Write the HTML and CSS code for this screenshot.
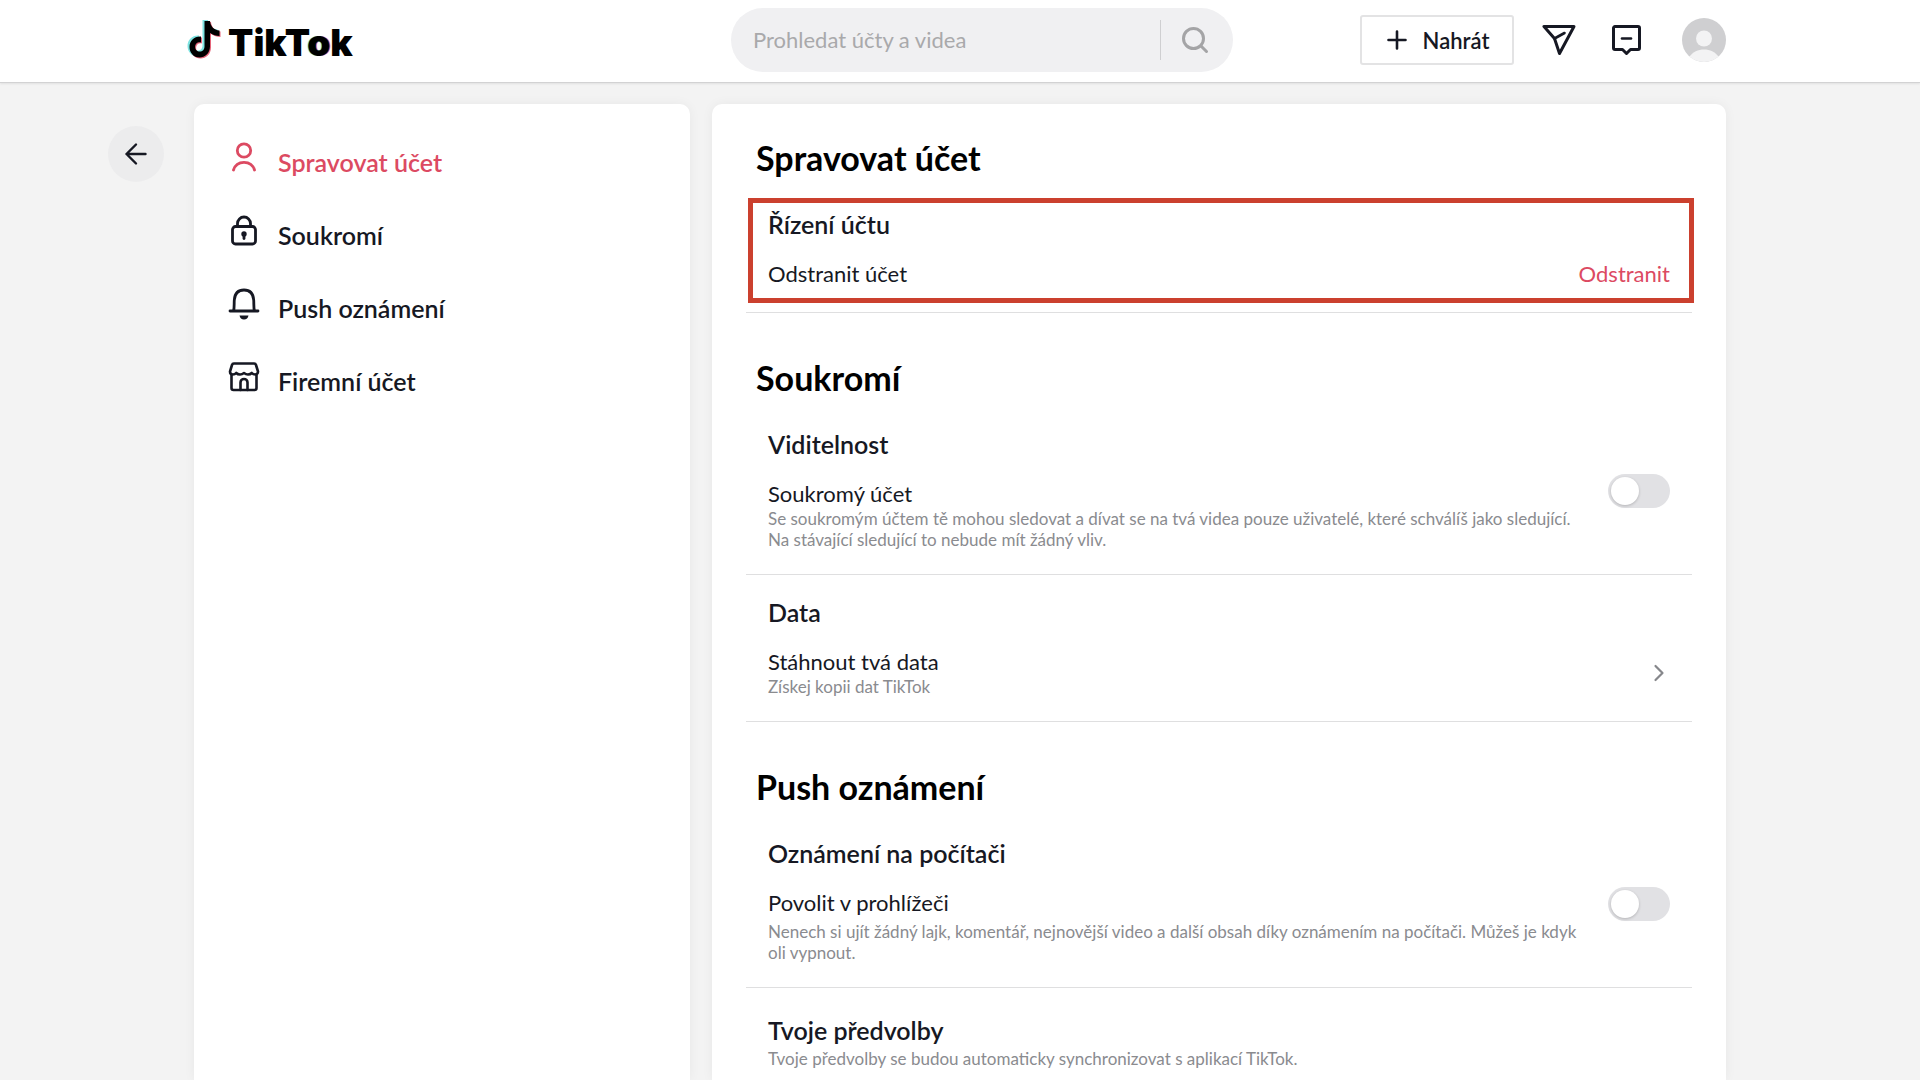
FILE: index.html
```
<!DOCTYPE html>
<html lang="cs">

<head>
    <meta charset="UTF-8">
    <meta name="viewport" content="width=device-width, initial-scale=1.0">
    <title>Spravovat účet | TikTok</title>
    <link rel="stylesheet" href="styles.css">
</head>

<body>

    <header class="header">
        <div class="header-inner">
            <a class="logo" href="#" aria-label="TikTok">
                <svg class="logo-mark" width="38" height="42" viewBox="0 0 38 42">
                    <defs>
                        <path id="note" d="M18.500 2h5.500c.5 5.500 4 9 9.500 9.500v5.500c-3.500 0-6.500-1-9.500-3v13.200c0 7-5 11.300-10.500 11.300C7.500 38.500 3.500 33.500 3.500 28 3.500 21.500 8.500 17 15 17.500v6c-3.400-.8-5.900 1.300-5.900 4.200 0 2.700 2 4.800 4.600 4.800 2.900 0 4.800-2 4.800-5.300z" />
                    </defs>
                    <use href="#note" x="-2" y="-1" fill="#7de3e1" />
                    <use href="#note" x="1" y="1" fill="#e5657a" />
                    <use href="#note" x="0" y="0" fill="#000" />
                </svg>
                <span class="logo-text">TikT<span class="logo-o">o</span>k</span>
            </a>

            <form class="search" role="search">
                <input class="search-input" type="text" placeholder="Prohledat účty a videa" aria-label="Prohledat účty a videa">
                <button class="search-button" type="button" aria-label="Hledat">
                    <svg width="28" height="28" viewBox="0 0 28 28" fill="none" stroke="#a4a4a6" stroke-width="3" stroke-linecap="round">
                        <circle cx="12.500" cy="12.500" r="10" />
                        <path d="M20 20l5.500 5.500" />
                    </svg>
                </button>
            </form>

            <div class="actions">
                <button class="upload" type="button">
                    <svg width="20" height="20" viewBox="0 0 20 20" fill="none" stroke="#161823" stroke-width="2.600" stroke-linecap="round">
                        <path d="M10 1.500v17M1.500 10h17" />
                    </svg>
                    Nahrát
                </button>
                <button class="icon-button" type="button" aria-label="Zprávy">
                    <svg width="34" height="32" viewBox="0 0 34 32" fill="none" stroke="#161823" stroke-width="3" stroke-linejoin="round" stroke-linecap="round">
                        <path d="M2 2.500h30L17.500 29.500 12.500 14.500z" />
                        <path d="M12.500 14.500l10-5.500" stroke-width="2.600" />
                    </svg>
                </button>
                <button class="icon-button" type="button" aria-label="Doručené">
                    <svg width="30" height="32" viewBox="0 0 30 32" fill="none" stroke="#161823" stroke-width="3" stroke-linejoin="round" stroke-linecap="round">
                        <path d="M3 2.500h23a1.500 1.500 0 0 1 1.500 1.500v20a1.500 1.500 0 0 1-1.500 1.500h-7.500l-4 4-4-4H3A1.500 1.500 0 0 1 1.500 24V4a1.500 1.500 0 0 1 1.500-1.500z" />
                        <path d="M10 14.500h9" stroke-width="2.600" />
                    </svg>
                </button>
                <button class="avatar" type="button" aria-label="Profil">
                    <svg width="44" height="44" viewBox="0 0 44 44">
                        <circle cx="22" cy="22" r="22" fill="#cfcfd1" />
                        <circle cx="22" cy="20.500" r="8" fill="#f3f3f4" />
                        <path d="M7.500 38.500C11 34 16 31.500 22 31.500s11 2.500 14.500 7A22 22 0 0 1 7.500 38.500z" fill="#f3f3f4" />
                    </svg>
                </button>
            </div>
        </div>
    </header>

    <main class="layout">
        <button class="back" type="button" aria-label="Zpět">
            <svg width="24" height="24" viewBox="0 0 24 24" fill="none" stroke="#161823" stroke-width="2.400" stroke-linecap="round" stroke-linejoin="round">
                <path d="M12 2.500L2.500 12 12 21.500M2.500 12H21.500" />
            </svg>
        </button>

        <nav class="card sidebar">
            <a class="nav-item active" href="#ucet">
                <svg width="32" height="32" viewBox="0 0 32 32" fill="none" stroke="currentColor" stroke-width="2.800" stroke-linecap="round">
                    <circle cx="16" cy="8.500" r="6.700" />
                    <path d="M5.500 28C7 23 11 20.300 16 20.300s9 2.700 10.500 7.700" />
                </svg>
                <span>Spravovat účet</span>
            </a>
            <a class="nav-item" href="#soukromi">
                <svg width="32" height="32" viewBox="0 0 32 32" fill="none" stroke="currentColor" stroke-width="2.800" stroke-linecap="round">
                    <rect x="4.500" y="11.500" width="23" height="17.500" rx="3" />
                    <path d="M9.500 11.500V8.500a6.500 6.500 0 0 1 13 0v3" />
                    <circle cx="16" cy="19" r="1.800" fill="currentColor" stroke-width="1.800" />
                    <path d="M16 19.500v4" />
                </svg>
                <span>Soukromí</span>
            </a>
            <a class="nav-item" href="#push">
                <svg width="32" height="32" viewBox="0 0 32 32" fill="none" stroke="currentColor" stroke-width="2.800" stroke-linecap="round" stroke-linejoin="round">
                    <path d="M2 23h28M5.500 23c1-3 .5-7 .8-11C6.800 5.500 10.500 2 16 2s9.200 3.500 9.700 10c.3 4-.2 8 .8 11" />
                    <path d="M11.500 27.500h9c-.5 2.600-2 4-4.500 4s-4-1.400-4.500-4z" fill="currentColor" stroke="none" />
                </svg>
                <span>Push oznámení</span>
            </a>
            <a class="nav-item" href="#firma">
                <svg width="32" height="32" viewBox="0 0 32 32" fill="none" stroke="currentColor" stroke-width="2.600" stroke-linecap="round" stroke-linejoin="round">
                    <path d="M6 2.500h20a2 2 0 0 1 2 1.500l2 6.500c0 1.800-1 3-2.800 3s-2.700-.7-3.400-1.500c-.8.800-1.800 1.500-3.800 1.500s-3-.7-4-1.500c-1 .8-2 1.500-4 1.500s-3-.7-3.800-1.500c-.7.800-1.600 1.500-3.400 1.500S2 12.300 2 10.500L4 4A2 2 0 0 1 6 2.500z" />
                    <path d="M3.500 14v13a2 2 0 0 0 2 2h21a2 2 0 0 0 2-2V14" />
                    <path d="M12.500 29v-7.500a3.500 3.500 0 0 1 7 0V29" />
                </svg>
                <span>Firemní účet</span>
            </a>
        </nav>

        <div class="card content">
            <section class="section" id="ucet">
                <h2>Spravovat účet</h2>
                <div class="group highlight">
                    <h3>Řízení účtu</h3>
                    <div class="row">
                        <span class="label">Odstranit účet</span>
                        <button class="delete" type="button">Odstranit</button>
                    </div>
                </div>
            </section>

            <section class="section" id="soukromi">
                <h2>Soukromí</h2>
                <div class="group">
                    <h3>Viditelnost</h3>
                    <div class="row">
                        <div class="text">
                            <label class="label" for="private">Soukromý účet</label>
                            <p>Se soukromým účtem tě mohou sledovat a dívat se na tvá videa pouze uživatelé, které schválíš jako sledující.<br>Na stávající sledující to nebude mít žádný vliv.</p>
                        </div>
                        <input class="toggle" type="checkbox" role="switch" id="private">
                    </div>
                </div>
                <div class="group">
                    <h3>Data</h3>
                    <a class="row" href="#data">
                        <div class="text">
                            <span class="label">Stáhnout tvá data</span>
                            <p>Získej kopii dat TikTok</p>
                        </div>
                        <svg class="chevron" width="20" height="20" viewBox="0 0 20 20" fill="none" stroke="#86878b" stroke-width="2.200" stroke-linecap="round" stroke-linejoin="round">
                            <path d="M5.500 3l7 7-7 7" />
                        </svg>
                    </a>
                </div>
            </section>

            <section class="section" id="push">
                <h2>Push oznámení</h2>
                <div class="group">
                    <h3>Oznámení na počítači</h3>
                    <div class="row">
                        <div class="text spaced">
                            <label class="label" for="browser">Povolit v prohlížeči</label>
                            <p>Nenech si ujít žádný lajk, komentář, nejnovější video a další obsah díky oznámením na počítači. Můžeš je kdyk<br>oli vypnout.</p>
                        </div>
                        <input class="toggle" type="checkbox" role="switch" id="browser">
                    </div>
                </div>
                <div class="group preferences">
                    <h3>Tvoje předvolby</h3>
                    <p>Tvoje předvolby se budou automaticky synchronizovat s aplikací TikTok.</p>
                </div>
            </section>
        </div>
    </main>

</body>

</html>
```
FILE: styles.css
```
* {
    box-sizing: border-box;
}

body {
    display: flex;
    flex-direction: column;
    min-height: 100vh;
    margin: 0;
    background-color: #f3f3f3;
    color: #161823;
    font-family: Lato, "Open Sans", sans-serif;
    font-size: 22px;
}

button {
    padding: 0;
    border: none;
    background: none;
    color: inherit;
    font-family: inherit;
    font-size: inherit;
    cursor: pointer;
}

a {
    color: inherit;
    text-decoration: none;
}

svg {
    display: block;
    flex-shrink: 0;
}

h2,
h3,
p {
    margin: 0;
}

/* header */

.header {
    background-color: #fff;
    border-bottom: 1px solid #d2d2d3;
    box-shadow: 0 1px 2px rgba(0, 0, 0, 0.08);
}

.header-inner {
    display: flex;
    align-items: center;
    max-width: 1532px;
    height: 82px;
    margin: 0 auto;
    padding-bottom: 2px;
}

.logo {
    display: flex;
    align-items: center;
    gap: 4px;
    margin-left: -8px;
}

.logo-text {
    padding-top: 6px;
    color: #000;
    font-family: Inter, sans-serif;
    font-size: 37px;
    font-weight: 900;
    line-height: 44px;
}

.logo-o {
    text-shadow: -1px 0 #7de3e1, 1px 0 #e5657a;
}

.search {
    display: flex;
    align-items: center;
    width: 502px;
    height: 64px;
    margin-left: auto;
    border-radius: 32px;
    background-color: #f0f0f2;
}

.search-input {
    flex: 1;
    min-width: 0;
    padding: 0 22px 2px;
    border: none;
    outline: none;
    background: none;
    color: #161823;
    font-family: inherit;
    font-size: 22px;
}

.search-input::placeholder {
    color: #a9a9ab;
}

.search-button {
    display: flex;
    align-items: center;
    width: 73px;
    height: 40px;
    padding-left: 20px;
    border-left: 1px solid #cfcfd1;
}

.actions {
    display: flex;
    align-items: center;
    margin-left: 127px;
}

.upload {
    display: flex;
    align-items: center;
    justify-content: center;
    gap: 16px;
    width: 154px;
    height: 50px;
    margin-right: 28px;
    padding-left: 2px;
    border: 2px solid #e3e3e4;
    border-radius: 3px;
    font-weight: 600;
}

.icon-button {
    margin-right: 36px;
}

.icon-button + .avatar {
    margin-left: 4px;
}

/* page */

.layout {
    display: grid;
    grid-template-columns: 1fr minmax(0, 496px) minmax(0, 1014px) 1fr;
    column-gap: 22px;
    flex: 1;
    padding-top: 21px;
}

.back {
    display: flex;
    align-items: center;
    justify-content: center;
    justify-self: end;
    width: 56px;
    height: 56px;
    margin: 22px 8px 0 0;
    border-radius: 50%;
    background-color: #ececed;
}

.card {
    border-radius: 10px 10px 0 0;
    background-color: #fff;
    box-shadow: 0 0 12px rgba(0, 0, 0, 0.05);
}

.sidebar {
    padding: 38px 34px;
}

.nav-item {
    display: flex;
    gap: 18px;
    margin-bottom: 33px;
    font-size: 25px;
    font-weight: 600;
    line-height: 40px;
}

.active {
    color: #dc4a62;
}

.content {
    padding: 34px 34px 0;
}

h2 {
    padding-left: 10px;
    color: #000;
    font-size: 34px;
    font-weight: 700;
    line-height: 40px;
}

h3 {
    margin-bottom: 22px;
    font-size: 25px;
    font-weight: 600;
    line-height: 28px;
}

.section {
    margin-bottom: 45px;
}

.group {
    padding: 23px 22px 24px;
    border-bottom: 1px solid #dfdfe0;
}

h2 + .group {
    padding-top: 32px;
}

.highlight {
    position: relative;
}

/* frame around the account removal setting */
.highlight::after {
    content: "";
    position: absolute;
    inset: 20px -2px 9px 2px;
    border: 5px solid #cb402e;
    pointer-events: none;
}

.row {
    display: flex;
    justify-content: space-between;
}

.label {
    display: block;
    line-height: 28px;
}

.text p,
.preferences p {
    color: #8a8b8f;
    font-size: 17px;
    line-height: 21px;
}

.spaced p {
    margin-top: 4px;
}

.delete {
    color: #dc4a62;
    line-height: 28px;
}

.chevron {
    align-self: center;
}

/* switch */

.toggle {
    appearance: none;
    flex-shrink: 0;
    width: 62px;
    height: 34px;
    margin: -6px 0 0;
    padding: 3px;
    border-radius: 17px;
    background-color: #e1e1e4;
    cursor: pointer;
}

.spaced + .toggle {
    margin-top: -2px;
}

.toggle::before {
    content: "";
    display: block;
    width: 28px;
    height: 28px;
    border-radius: 50%;
    background-color: #fff;
    box-shadow: 0 1px 3px rgba(0, 0, 0, 0.2);
}

.toggle:checked {
    background-color: #0be09b;
}

.toggle:checked::before {
    margin-left: auto;
}

.preferences {
    padding-top: 28px;
}

.preferences h3 {
    margin-bottom: 4px;
}

.section:last-child {
    margin-bottom: 0;
}

.section:last-child .group:last-child {
    padding-bottom: 0;
    border-bottom: none;
}
```
